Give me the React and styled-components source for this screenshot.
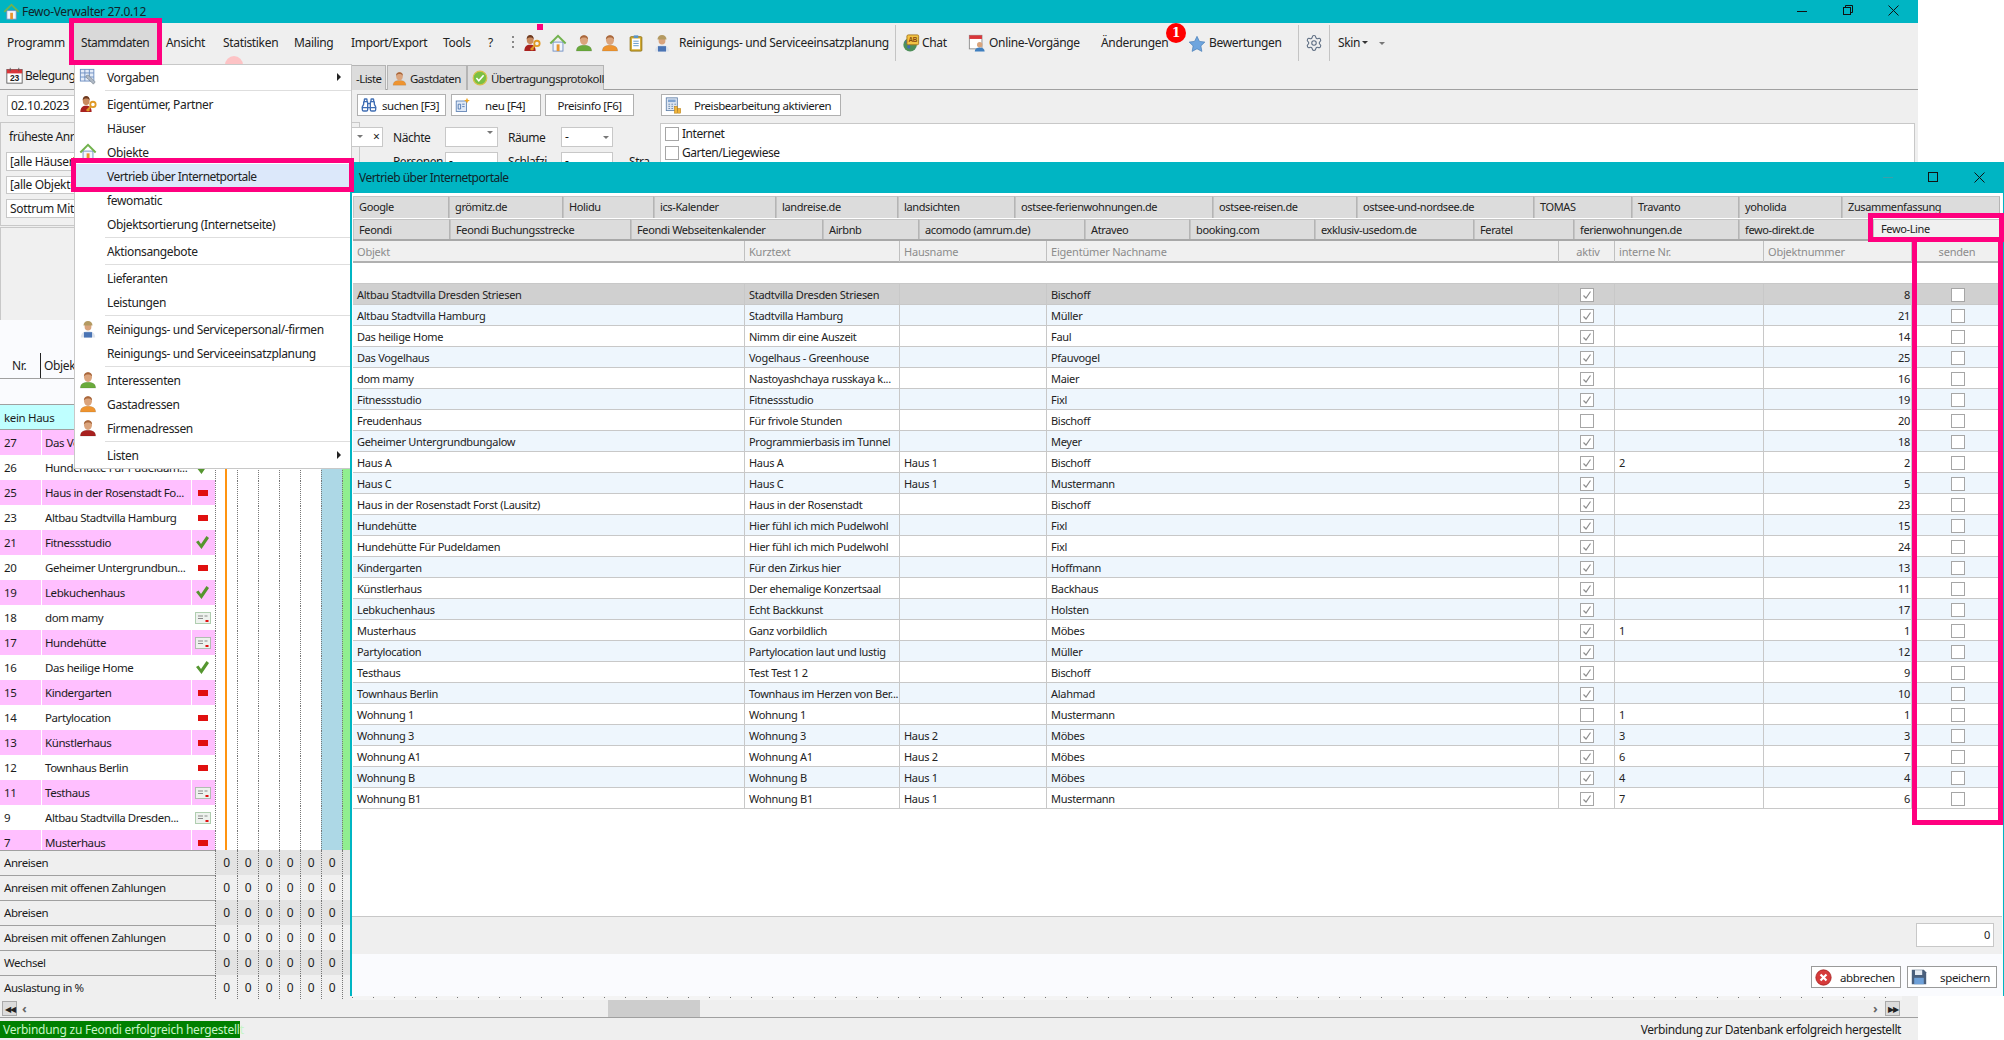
import React from "react";
import styled, { createGlobalStyle, css } from "styled-components";
import { Settings, Binoculars } from "lucide-react";

const FONT = `"Noto Sans", "Liberation Sans", sans-serif`;
const TEAL = "#00b5c3";
const PINK = "#ff007f";
const LINE = "#c8c8c8";
const DARK = "#a0a0a0";

const Global = createGlobalStyle`
  html, body { margin: 0; padding: 0; background: #fff; overflow: hidden; }
  * { box-sizing: border-box; }
  body { font-family: ${FONT}; font-size: 12px; letter-spacing: -0.33px; color: #1c1c1c; }
  svg { flex: none; }
`;

const place = css`
  position: absolute;
  left: ${(p) => p.$x}px;
  top: ${(p) => p.$y}px;
`;
const box = css`
  ${place}
  width: ${(p) => p.$w}px;
  height: ${(p) => p.$h}px;
`;

const Screen = styled.div`
  position: relative;
  width: 2004px;
  height: 1040px;
  overflow: hidden;
  background: #fff;
`;
const MainWindow = styled.div`
  position: absolute;
  left: 0;
  top: 0;
  width: 1918px;
  height: 1040px;
  background: #efefef;
`;
const TitleBar = styled.div`
  position: absolute;
  left: 0;
  top: 0;
  width: 100%;
  height: 23px;
  background: ${TEAL};
`;
const TitleText = styled.span`
  position: absolute;
  left: 22px;
  top: 3px;
  font-size: 12px;
  line-height: 18px;
  color: #10242a;
`;
const IconSlot = styled.div`
  ${place}
  line-height: 0;
`;
const MenuBar = styled.div`
  position: absolute;
  left: 0;
  top: 23px;
  width: 100%;
  height: 67px;
  border-bottom: 1px solid ${DARK};
`;
const MenuLabel = styled.span`
  ${place}
  font-size: 12px;
  line-height: 18px;
  white-space: nowrap;
  color: #222;
`;
const StammBox = styled.div`
  position: absolute;
  left: 69px;
  top: 18px;
  width: 93px;
  height: 47px;
  background: #d9d9d9;
  border: 5px solid ${PINK};
  z-index: 30;
  padding: 11px 0 0 7px;
  font-size: 12px;
  line-height: 18px;
  letter-spacing: -0.45px;
  color: #222;
`;
const PinkDot = styled.div`
  position: absolute;
  left: 537px;
  top: 24px;
  width: 6px;
  height: 6px;
  background: ${PINK};
`;
const GhostBadge = styled.div`
  position: absolute;
  left: 225px;
  top: 56px;
  width: 18px;
  height: 18px;
  border-radius: 50%;
  background: #fdc3c5;
`;
const VSep = styled.div`
  ${place}
  width: 1px;
  height: 36px;
  background: #c4c4c4;
`;
const Badge = styled.div`
  position: absolute;
  left: 1166px;
  top: 23px;
  width: 20px;
  height: 20px;
  border-radius: 50%;
  background: #f00;
  color: #fff;
  font: bold 12px/20px "DejaVu Serif", serif;
  text-align: center;
`;
const Caret = styled.div`
  ${place}
  width: 0;
  height: 0;
  border-left: 3px solid transparent;
  border-right: 3px solid transparent;
  border-top: 3px solid ${(p) => p.$c || "#333"};
`;
const StripTab = styled.div`
  ${box}
  background: #dcdcdc;
  border: 1px solid #b4b4b4;
  border-bottom: none;
  display: flex;
  align-items: center;
  gap: 3px;
  padding-left: ${(p) => p.$pad ?? 4}px;
  font-size: 11.5px;
  letter-spacing: -0.55px;
  white-space: nowrap;
`;
const FlatLabel = styled.span`
  ${place}
  font-size: 12px;
  line-height: 16px;
  letter-spacing: -0.45px;
  white-space: nowrap;
`;
const Field = styled.div`
  ${box}
  background: #fff;
  border: 1px solid ${LINE};
  font-size: 12px;
  line-height: ${(p) => p.$h - 2}px;
  padding-left: 3px;
  white-space: nowrap;
  overflow: hidden;
`;
const ToolButton = styled.div`
  ${box}
  background: #fff;
  border: 1px solid #b0b0b0;
  display: flex;
  align-items: center;
  justify-content: ${(p) => (p.$center ? "center" : "flex-start")};
  padding-left: ${(p) => (p.$center ? 0 : 3)}px;
  font-size: 11.5px;
  letter-spacing: -0.45px;
  white-space: nowrap;
`;
const ButtonText = styled.span`
  margin-left: ${(p) => p.$gap}px;
`;
const GroupPanel = styled.div`
  ${box}
  background: #f0f0f0;
  border: 1px solid ${LINE};
`;
const WhitePanel = styled.div`
  ${box}
  background: #fff;
  border: 1px solid ${LINE};
`;
const Check = styled.div`
  ${place}
  width: 14px;
  height: 14px;
  background: #fff;
  border: 1px solid #a6a6a6;
`;

/* ---------- left planning grid ---------- */
const PlanHeadArea = styled.div`
  position: absolute;
  left: 0;
  top: 320px;
  width: 352px;
  height: 85px;
  background: #fafbfe;
  border-bottom: 1px solid ${DARK};
`;
const PlanHead = styled.div`
  position: absolute;
  left: 0;
  top: 33px;
  width: 100%;
  height: 26px;
  border-bottom: 1px solid ${DARK};
  display: flex;
  align-items: center;
`;
const HeadCell = styled.div`
  width: ${(p) => p.$w}px;
  height: 25px;
  line-height: 25px;
  padding-left: ${(p) => p.$pad}px;
  border-right: ${(p) => (p.$sep ? "1px solid #222" : "none")};
`;
const HouseRow = styled.div`
  position: absolute;
  left: 0;
  top: 405px;
  width: 352px;
  height: 25px;
  background: #bfffff;
  border-bottom: 1px solid ${DARK};
  line-height: 25px;
  padding-left: 4px;
  font-size: 11.5px;
`;
const PlanBody = styled.div`
  position: absolute;
  left: 0;
  top: 430px;
  width: 352px;
  height: 420px;
  overflow: hidden;
  font-size: 11.5px;
  letter-spacing: -0.42px;
`;
const PlanRow = styled.div`
  display: grid;
  grid-template-columns: 41px 150px 24px 22px repeat(5, 21px) 10px;
  height: 25px;
`;
const NrCell = styled.div`
  background: ${(p) => (p.$pink ? "#ffbfff" : "#fff")};
  border-bottom: 1px solid ${DARK};
  line-height: 25px;
  padding-left: 4px;
`;
const NameCell = styled.div`
  background: ${(p) => (p.$pink ? "#ffbfff" : "#fff")};
  border-bottom: 1px solid ${DARK};
  border-left: 1px solid #fff;
  line-height: 25px;
  padding-left: 3px;
  white-space: nowrap;
  overflow: hidden;
`;
const StateCell = styled.div`
  background: ${(p) => (p.$pink ? "#ffbfff" : "#fff")};
  border-bottom: 1px solid ${DARK};
  border-left: 1px solid #fff;
  display: flex;
  align-items: center;
  justify-content: center;
  padding-right: 2px;
`;
const DayCell = styled.div`
  background: ${(p) => p.$bg || "#fff"};
  border-left: 1px dotted #777;
  border-bottom: 1px dotted #777;
`;
const OrangeLine = styled.div`
  position: absolute;
  left: 225px;
  top: 430px;
  width: 2px;
  height: 420px;
  background: #ff9410;
`;
const MinusMark = styled.div`
  width: 10px;
  height: 6px;
  background: #e01010;
`;
const SumArea = styled.div`
  position: absolute;
  left: 0;
  top: 850px;
  width: 352px;
  height: 150px;
  overflow: hidden;
  font-size: 11.5px;
  letter-spacing: -0.42px;
`;
const SumRow = styled.div`
  display: grid;
  grid-template-columns: 215px 22px repeat(5, 21px) 10px;
  height: 25px;
`;
const SumLabel = styled.div`
  background: #efefef;
  border-top: 1px solid ${DARK};
  line-height: 23px;
  padding-left: 4px;
  white-space: nowrap;
`;
const SumCell = styled.div`
  background: ${(p) => (p.$shade ? "#e3e3e3" : "#f0f0f0")};
  border-left: 1px dotted #777;
  border-bottom: 1px dotted #777;
  text-align: center;
  line-height: 25px;
  font-size: 12px;
`;
const TickStrip = styled.div`
  position: absolute;
  left: 352px;
  top: 996px;
  width: 1550px;
  height: 4px;
  background: repeating-linear-gradient(90deg, #777 0 1px, transparent 1px 21px) 0 1px / 100% 1px no-repeat, #f4f4f4;
`;
const ScrollZone = styled.div`
  position: absolute;
  left: 0;
  top: 1000px;
  width: 1918px;
  height: 18px;
  background: #efefef;
  border-bottom: 1px solid ${DARK};
`;
const ScrollThumb = styled.div`
  position: absolute;
  left: 608px;
  top: 0;
  width: 92px;
  height: 17px;
  background: #cdcdcd;
`;
const ScrollEnd = styled.div`
  ${place}
  width: 15px;
  height: 15px;
  top: 1px;
  background: #dcdcdc;
  border: 1px solid #aaa;
  color: #222;
  font-size: 8px;
  line-height: 13px;
  text-align: center;
  letter-spacing: -1px;
`;
const ScrollArrow = styled.div`
  ${place}
  top: 1px;
  color: #666;
  font-size: 13px;
  line-height: 15px;
  font-weight: bold;
`;
const StatusOk = styled.div`
  position: absolute;
  left: 0;
  top: 1021px;
  width: 240px;
  height: 17px;
  background: #008000;
  color: #c6f5c6;
  font-size: 12px;
  line-height: 17px;
  padding-left: 3px;
  white-space: nowrap;
  letter-spacing: -0.25px;
`;
const StatusRight = styled.div`
  position: absolute;
  right: 17px;
  top: 1021px;
  font-size: 12px;
  line-height: 17px;
  white-space: nowrap;
  letter-spacing: -0.42px;
`;

/* ---------- Stammdaten menu ---------- */
const Menu = styled.div`
  position: absolute;
  left: 74px;
  top: 64px;
  width: 278px;
  height: 405px;
  background: #fff;
  border: 1px solid ${LINE};
  display: flex;
  flex-direction: column;
  z-index: 10;
`;
const MenuItem = styled.div`
  position: relative;
  flex: 0 0 24px;
  height: 24px;
  line-height: 25px;
  padding-left: 32px;
  font-size: 12px;
  letter-spacing: ${(p) => (p.$active ? "-0.52px" : "-0.36px")};
  white-space: nowrap;
  background: ${(p) => (p.$active ? "#dce8fa" : "transparent")};
  color: #222;
`;
const MenuIcon = styled.span`
  position: absolute;
  left: 4px;
  top: 3px;
  line-height: 0;
`;
const MenuArrow = styled.span`
  position: absolute;
  right: 10px;
  top: 8px;
  width: 0;
  height: 0;
  border-top: 4px solid transparent;
  border-bottom: 4px solid transparent;
  border-left: 4px solid #222;
`;
const MenuSep = styled.div`
  flex: 0 0 1px;
  margin: 1px 0 1px 30px;
  background: #dedede;
`;
const VertriebBox = styled.div`
  position: absolute;
  left: 71px;
  top: 158px;
  width: 283px;
  height: 34px;
  border: 5px solid ${PINK};
  z-index: 30;
`;

/* ---------- dialog ---------- */
const Dialog = styled.div`
  position: absolute;
  left: 350px;
  top: 162px;
  width: 1654px;
  height: 834px;
  background: #fafbfe;
  border-left: 2px solid ${TEAL};
  border-right: 1px solid ${TEAL};
  z-index: 20;
`;
const DialogTitle = styled.div`
  position: absolute;
  left: -2px;
  top: 0;
  width: 1654px;
  height: 31px;
  background: ${TEAL};
  padding-left: 9px;
  line-height: 32px;
  font-size: 12px;
  letter-spacing: -0.52px;
  color: #10242a;
`;
const DialogBody = styled.div`
  position: absolute;
  left: 0;
  top: 31px;
  width: 1650px;
  height: 761px;
  background: #fff;
  border-bottom: 2px solid ${DARK};
`;
const TabRows = styled.div`
  position: absolute;
  left: 1px;
  top: 3px;
  width: 1647px;
`;
const TabRow = styled.div`
  display: flex;
  height: ${(p) => p.$h}px;
  margin-bottom: 1px;
`;
const Tab = styled.div`
  width: ${(p) => p.$w}px;
  height: 100%;
  background: ${(p) => (p.$on ? "#f0f0f0" : "#dcdcdc")};
  border-right: 1px solid #b4b4b4;
  border-top: 1px solid #c4c4c4;
  border-left: 1px solid #c4c4c4;
  line-height: ${(p) => (p.$on ? 17 : 19)}px;
  padding-left: ${(p) => (p.$on ? 7 : 5)}px;
  font-size: 11px;
  letter-spacing: -0.38px;
  white-space: nowrap;
  color: #222;
  overflow: hidden;
`;
const TabFoot = styled.div`
  height: 2px;
  background: #a8a8a8;
  margin-top: -1px;
`;
const Grid = styled.div`
  position: absolute;
  left: 1px;
  top: 48px;
  width: 1647px;
`;
const gridCols = "392px 155px 147px 512px 56px 149px 148px 88px";
const GridHead = styled.div`
  display: grid;
  grid-template-columns: ${gridCols};
  height: 22px;
  background: #f0f0f0;
  border-bottom: 2px solid #b0b0b0;
`;
const GridHeadCell = styled.div`
  line-height: 21px;
  padding-left: ${(p) => (p.$center ? 3 : 4)}px;
  text-align: ${(p) => (p.$center ? "center" : "left")};
  font-size: 11px;
  letter-spacing: -0.2px;
  color: #8c8c8c;
  border-right: 1px solid #c0c0c0;
  white-space: nowrap;
`;
const FilterRow = styled.div`
  height: 21px;
  background: #fff;
  border-bottom: 1px solid ${LINE};
`;
const GridRow = styled.div`
  display: grid;
  grid-template-columns: ${gridCols};
  height: 21px;
  background: ${(p) => (p.$sel ? "#d0d0d0" : p.$alt ? "#eef6fd" : "#fff")};
  border-bottom: 1px solid ${LINE};
`;
const GridCell = styled.div`
  line-height: 22px;
  height: 20px;
  font-size: 11px;
  letter-spacing: -0.3px;
  padding: 0 ${(p) => (p.$right ? 1 : 0)}px 0 ${(p) => (p.$right ? 0 : 4)}px;
  text-align: ${(p) => (p.$right ? "right" : "left")};
  border-right: 1px solid ${LINE};
  white-space: nowrap;
  overflow: hidden;
  color: #222;
`;
const BoxCell = styled.div`
  display: flex;
  align-items: center;
  justify-content: center;
  padding-left: ${(p) => (p.$plain ? 4 : 0)}px;
  padding-top: 2px;
  height: 20px;
  border-right: 1px solid ${(p) => (p.$plain ? "transparent" : LINE)};
`;
const CellCheck = styled.div`
  width: 14px;
  height: 14px;
  background: #fff;
  border: 1px solid #a6a6a6;
  display: flex;
  align-items: center;
  justify-content: center;
  line-height: 0;
`;
const SumBar = styled.div`
  position: absolute;
  left: 0;
  top: 723px;
  width: 1650px;
  height: 38px;
  background: #efefef;
  border-top: 1px solid ${LINE};
`;
const SumField = styled.div`
  position: absolute;
  left: 1564px;
  top: 6px;
  width: 78px;
  height: 24px;
  background: #fff;
  border: 1px solid ${LINE};
  text-align: right;
  padding-right: 3px;
  line-height: 22px;
  font-size: 11px;
`;
const ActionButton = styled.div`
  ${box}
  background: #fff;
  border: 1px solid #9a9a9a;
  display: flex;
  align-items: center;
  padding-left: 3px;
  font-size: 11.5px;
`;
const PinkColumn = styled.div`
  position: absolute;
  left: 1912px;
  top: 242px;
  width: 91px;
  height: 583px;
  border: 5px solid ${PINK};
  border-top: none;
  z-index: 40;
`;
const PinkTab = styled.div`
  position: absolute;
  left: 1868px;
  top: 213px;
  width: 136px;
  height: 29px;
  border: 5px solid ${PINK};
  z-index: 40;
`;

/* ---------- drawn icons ---------- */
const Svg = ({ s = 18, children }) => (
  <svg width={s} height={s} viewBox="0 0 20 20">{children}</svg>
);
const Person = ({ c, s }) => (
  <Svg s={s}>
    <path d="M1.5 19c0-5 3.5-6.5 8.5-6.5S18.5 14 18.5 19z" fill={c} stroke="#0003" strokeWidth=".6" />
    <ellipse cx="10" cy="7" rx="4.4" ry="5.2" fill="#dba47c" />
    <path d="M5.5 6.500C5.200 2.500 8 1.500 10 1.500s4.800 1 4.500 5c-1-2-2.500-2.500-4.500-2.500s-3.500.5-4.500 2.500z" fill="#a9673c" />
  </Svg>
);
const KeyPerson = ({ s }) => (
  <Svg s={s}>
    <path d="M1.5 19c0-5 2.5-7 6.500-7s6 2 6 7z" fill="#a8211f" />
    <ellipse cx="8" cy="6.5" rx="3.8" ry="4.8" fill="#c98a5e" />
    <path d="M4 6C4 2.500 6 1 8 1s4 1.500 4 5c-1-1.500-2-2-4-2s-3 .5-4 2z" fill="#6d3a20" />
    <circle cx="15.5" cy="10.5" r="3" fill="none" stroke="#e09a25" strokeWidth="2" />
    <path d="M13.5 12.500l-5 5M10 16l1.500 1.500" stroke="#e09a25" strokeWidth="2" fill="none" />
  </Svg>
);
const House = ({ s }) => (
  <Svg s={s}>
    <rect x="4.5" y="9" width="11" height="10" fill="#f2f5fb" stroke="#6f8fc4" />
    <rect x="8.5" y="11.5" width="3.2" height="7.5" fill="#e8952e" />
    <path d="M1.5 10.500L10 2l8.500 8.500" fill="none" stroke="#72b24e" strokeWidth="2.2" />
  </Svg>
);
const Clipboard = ({ s }) => (
  <Svg s={s}>
    <rect x="3.5" y="3" width="13" height="16" rx="1" fill="#d2a92c" stroke="#8f7214" />
    <rect x="5.5" y="5" width="9" height="12" fill="#fff" />
    <rect x="7.5" y="1.5" width="5" height="3" fill="#5a94c9" />
    <path d="M7 8h6M7 10.500h6M7 13h6" stroke="#5a94c9" />
  </Svg>
);
const Worker = ({ s }) => (
  <Svg s={s}>
    <path d="M2 19.500c0-5 3.500-7 8-7s8 2 8 7z" fill="#dfe4ec" />
    <path d="M5.5 19.500v-6h9v6z" fill="#4a74b4" />
    <ellipse cx="10" cy="7.5" rx="3.8" ry="4.2" fill="#d9a47c" />
    <path d="M5 6c0-3 2-5 5-5s5 2 5 5z" fill="#b49a62" />
  </Svg>
);
const Chat = ({ s }) => (
  <Svg s={s}>
    <circle cx="9" cy="12" r="7.5" fill="#4e8f5a" />
    <path d="M4 8c3 1 5 4 3 8" fill="none" stroke="#3b6fb5" strokeWidth="3" />
    <rect x="5.5" y="1" width="13" height="11" rx="1.5" fill="#f3c443" stroke="#a5741a" />
    <text x="12" y="9.3" fontSize="7" fontWeight="700" textAnchor="middle" fill="#8a4a10" fontFamily="Liberation Sans">AB</text>
  </Svg>
);
const OnlineIcon = ({ s }) => (
  <Svg s={s}>
    <rect x="1.5" y="1.5" width="14" height="15" fill="#fff" stroke="#8b8b8b" />
    <rect x="1.5" y="1.5" width="14" height="4" fill="#d9363a" />
    <circle cx="13" cy="12" r="3" fill="#d9a47c" />
    <path d="M7.5 19.500c0-3 2.500-4.500 5.500-4.500s5.500 1.500 5.500 4.500z" fill="#3f7fbf" />
  </Svg>
);
const Star = ({ s }) => (
  <Svg s={s}>
    <path d="M10 1.500l2.700 5.600 6 .8-4.400 4.200 1.100 6.100L10 15.300l-5.400 2.900 1.100-6.100L1.300 7.900l6-.8z" fill="#6ea5de" stroke="#4a7fb8" strokeWidth=".8" />
  </Svg>
);
const CalendarDay = ({ s }) => (
  <Svg s={s}>
    <rect x="1" y="3" width="18" height="16" fill="#fff" stroke="#555" />
    <rect x="1" y="3" width="18" height="4.5" fill="#d9363a" />
    <path d="M5 1v4M15 1v4" stroke="#555" />
    <text x="10" y="17" fontSize="10" fontWeight="700" textAnchor="middle" fill="#222" fontFamily="Liberation Sans">23</text>
  </Svg>
);
const Preferences = ({ s }) => (
  <Svg s={s}>
    <rect x="1.5" y="1.5" width="15" height="13" fill="#e4ecf8" stroke="#6a8cc0" />
    <path d="M1.5 5.500h15M6.500 1.500v13M11.500 1.500v13M1.500 10h15" stroke="#6a8cc0" />
    <path d="M8 8.500c1.500-1 3.500-.5 4 1l6 6-2 2.500-6-6c-1.500-.5-2.500-2-2-3.500z" fill="#aeb8c4" stroke="#6c7580" strokeWidth=".6" />
  </Svg>
);
const NewCard = ({ s }) => (
  <Svg s={s}>
    <rect x="1.5" y="5" width="13" height="13" fill="#dfe9f7" stroke="#5077ad" />
    <path d="M4 9h3v6H4zM9 9h3M9 12h3" stroke="#3e6aa8" fill="none" />
    <path d="M15 1l1 2.500 2.500 1-2.500 1-1 2.500-1-2.500-2.500-1 2.500-1z" fill="#f0a51e" />
  </Svg>
);
const CalcIcon = ({ s }) => (
  <Svg s={s}>
    <rect x="1.5" y="1" width="13" height="15" fill="#dfe7f2" stroke="#5f7fa8" />
    <rect x="3.5" y="3" width="9" height="3" fill="#7fa4d2" />
    <path d="M4 8.500h2M7.500 8.500h2M11 8.500h2M4 11h2M7.500 11h2M4 13.500h2M7.500 13.500h2" stroke="#5f7fa8" />
    <rect x="11" y="11" width="3.5" height="8" fill="#f0b33a" stroke="#b27d12" strokeWidth=".6" />
    <rect x="15" y="13.5" width="3.5" height="5.5" fill="#f0b33a" stroke="#b27d12" strokeWidth=".6" />
  </Svg>
);
const Protocol = ({ s }) => (
  <Svg s={s}>
    <circle cx="10" cy="10" r="8.5" fill="#7ac043" stroke="#d8c04a" strokeWidth="1.5" />
    <path d="M5.5 10l3 3.500 6-7" fill="none" stroke="#fff" strokeWidth="2" />
  </Svg>
);
const CancelIcon = () => (
  <Svg s={17}>
    <circle cx="10" cy="10" r="9" fill="#d63a3a" stroke="#a82222" />
    <path d="M6.5 6.500l7 7M13.500 6.500l-7 7" stroke="#fff" strokeWidth="2.6" />
  </Svg>
);
const SaveIcon = () => (
  <Svg s={16}>
    <path d="M1 1h15l3 3v15H1z" fill="#4a5f7c" />
    <rect x="5" y="1.5" width="9" height="6" fill="#e6ebf2" />
    <rect x="4" y="11" width="12" height="8" fill="#6ea0d8" />
  </Svg>
);
const GreenCheck = () => (
  <svg width="13" height="13" viewBox="0 0 13 13">
    <path d="M0 6l2.500-1.500L5 8l5.500-8L13 2 5.500 13z" fill="#55962f" />
  </svg>
);
const CalState = () => (
  <svg width="16" height="12" viewBox="0 0 16 12">
    <rect x=".5" y=".5" width="15" height="11" fill="#eef2ee" stroke="#6aa56a" strokeDasharray="1 1" />
    <path d="M3 4h5M3 6.500h5M9.500 4h3" stroke="#8a8a8a" />
    <rect x="10.5" y="8" width="3" height="2" fill="#e01010" />
  </svg>
);
const SmallCheck = () => (
  <svg width="10" height="10" viewBox="0 0 10 10">
    <path d="M1.5 5.500L4 8l4.500-6.500" fill="none" stroke="#8c8c8c" strokeWidth="1.2" />
  </svg>
);
const WinMin = ({ c = "#111" }) => (
  <svg width="10" height="10" viewBox="0 0 10 10"><path d="M0 5.500h10" stroke={c} /></svg>
);
const WinRestore = () => (
  <svg width="10" height="10" viewBox="0 0 10 10" fill="none" stroke="#111">
    <path d="M2.500 2.500V.5h7v7h-2" /><rect x=".5" y="2.5" width="7" height="7" />
  </svg>
);
const WinMax = () => (
  <svg width="10" height="10" viewBox="0 0 10 10" fill="none" stroke="#111"><rect x=".5" y=".5" width="9" height="9" /></svg>
);
const WinClose = () => (
  <svg width="11" height="11" viewBox="0 0 11 11" fill="none" stroke="#111"><path d="M.5.500l10 10M10.500.5l-10 10" /></svg>
);

/* ---------- data ---------- */
const topMenu = [
  ["Programm", 7], ["Ansicht", 166], ["Statistiken", 223], ["Mailing", 294],
  ["Import/Export", 351], ["Tools", 443], ["?", 488],
  ["Reinigungs- und Serviceeinsatzplanung", 679], ["Chat", 922],
  ["Online-Vorgänge", 989], ["Änderungen", 1101], ["Bewertungen", 1209], ["Skin", 1338],
];
const menuEntries = [
  { t: "Vorgaben", i: <Preferences s={18} />, sub: true }, "-",
  { t: "Eigentümer, Partner", i: <KeyPerson s={18} /> },
  { t: "Häuser" },
  { t: "Objekte", i: <House s={18} /> },
  { t: "Vertrieb über Internetportale", on: true },
  { t: "fewomatic" },
  { t: "Objektsortierung (Internetseite)" }, "-",
  { t: "Aktionsangebote" }, "-",
  { t: "Lieferanten" },
  { t: "Leistungen" }, "-",
  { t: "Reinigungs- und Servicepersonal/-firmen", i: <Worker s={18} /> },
  { t: "Reinigungs- und Serviceeinsatzplanung" }, "-",
  { t: "Interessenten", i: <Person c="#6aaa3c" s={18} /> },
  { t: "Gastadressen", i: <Person c="#ee9430" s={18} /> },
  { t: "Firmenadressen", i: <Person c="#a8211f" s={18} /> }, "-",
  { t: "Listen", sub: true },
];
const planRows = [
  [27, "Das Vogelhaus", ""], [26, "Hundehütte Für Pudeldam...", "c"], [25, "Haus in der Rosenstadt Fo...", "m"],
  [23, "Altbau Stadtvilla Hamburg", "m"], [21, "Fitnessstudio", "c"], [20, "Geheimer Untergrundbun...", "m"],
  [19, "Lebkuchenhaus", "c"], [18, "dom mamy", "k"], [17, "Hundehütte", "k"], [16, "Das heilige Home", "c"],
  [15, "Kindergarten", "m"], [14, "Partylocation", "m"], [13, "Künstlerhaus", "m"], [12, "Townhaus Berlin", "m"],
  [11, "Testhaus", "k"], [9, "Altbau Stadtvilla Dresden...", "k"], [7, "Musterhaus", "m"],
];
const sums = ["Anreisen", "Anreisen mit offenen Zahlungen", "Abreisen", "Abreisen mit offenen Zahlungen", "Wechsel", "Auslastung in %"];
const tabs1 = [["Google", 96], ["grömitz.de", 114], ["Holidu", 91], ["ics-Kalender", 122], ["landreise.de", 122], ["landsichten", 117], ["ostsee-ferienwohnungen.de", 198], ["ostsee-reisen.de", 144], ["ostsee-und-nordsee.de", 177], ["TOMAS", 98], ["Travanto", 107], ["yoholida", 103], ["Zusammenfassung", 158]];
const tabs2 = [["Feondi", 97], ["Feondi Buchungsstrecke", 181], ["Feondi Webseitenkalender", 192], ["Airbnb", 96], ["acomodo (amrum.de)", 166], ["Atraveo", 105], ["booking.com", 125], ["exklusiv-usedom.de", 159], ["Feratel", 100], ["ferienwohnungen.de", 165], ["fewo-direkt.de", 134], ["Fewo-Line", 127, true]];
const heads = ["Objekt", "Kurztext", "Hausname", "Eigentümer Nachname"];
const objects = [
  ["Altbau Stadtvilla Dresden Striesen", "Stadtvilla Dresden Striesen", "", "Bischoff", 1, "", 8],
  ["Altbau Stadtvilla Hamburg", "Stadtvilla Hamburg", "", "Müller", 1, "", 21],
  ["Das heilige Home", "Nimm dir eine Auszeit", "", "Faul", 1, "", 14],
  ["Das Vogelhaus", "Vogelhaus - Greenhouse", "", "Pfauvogel", 1, "", 25],
  ["dom mamy", "Nastoyashchaya russkaya k...", "", "Maier", 1, "", 16],
  ["Fitnessstudio", "Fitnessstudio", "", "Fixl", 1, "", 19],
  ["Freudenhaus", "Für frivole Stunden", "", "Bischoff", 0, "", 20],
  ["Geheimer Untergrundbungalow", "Programmierbasis im Tunnel", "", "Meyer", 1, "", 18],
  ["Haus A", "Haus A", "Haus 1", "Bischoff", 1, "2", 2],
  ["Haus C", "Haus C", "Haus 1", "Mustermann", 1, "", 5],
  ["Haus in der Rosenstadt Forst (Lausitz)", "Haus in der Rosenstadt", "", "Bischoff", 1, "", 23],
  ["Hundehütte", "Hier fühl ich mich Pudelwohl", "", "Fixl", 1, "", 15],
  ["Hundehütte Für Pudeldamen", "Hier fühl ich mich Pudelwohl", "", "Fixl", 1, "", 24],
  ["Kindergarten", "Für den Zirkus hier", "", "Hoffmann", 1, "", 13],
  ["Künstlerhaus", "Der ehemalige Konzertsaal", "", "Backhaus", 1, "", 11],
  ["Lebkuchenhaus", "Echt Backkunst", "", "Holsten", 1, "", 17],
  ["Musterhaus", "Ganz vorbildlich", "", "Möbes", 1, "1", 1],
  ["Partylocation", "Partylocation laut und lustig", "", "Müller", 1, "", 12],
  ["Testhaus", "Test Test 1 2", "", "Bischoff", 1, "", 9],
  ["Townhaus Berlin", "Townhaus im Herzen von Ber...", "", "Alahmad", 1, "", 10],
  ["Wohnung 1", "Wohnung 1", "", "Mustermann", 0, "1", 1],
  ["Wohnung 3", "Wohnung 3", "Haus 2", "Möbes", 1, "3", 3],
  ["Wohnung A1", "Wohnung A1", "Haus 2", "Möbes", 1, "6", 7],
  ["Wohnung B", "Wohnung B", "Haus 1", "Möbes", 1, "4", 4],
  ["Wohnung B1", "Wohnung B1", "Haus 1", "Mustermann", 1, "7", 6],
];
const dayBg = [null, null, null, null, null, null, "#add8e6", "#90ee90"];

export default function App() {
  return (
    <Screen>
      <Global />
      <MainWindow>
        <TitleBar>
          <IconSlot $x={3} $y={3}><House s={17} /></IconSlot>
          <TitleText>Fewo-Verwalter 27.0.12</TitleText>
          <IconSlot $x={1797} $y={6}><WinMin /></IconSlot>
          <IconSlot $x={1843} $y={5}><WinRestore /></IconSlot>
          <IconSlot $x={1888} $y={5}><WinClose /></IconSlot>
        </TitleBar>

        <MenuBar>
          {topMenu.map(([t, x]) => <MenuLabel key={t} $x={x} $y={11}>{t}</MenuLabel>)}
          <IconSlot $x={512} $y={12}>
            <svg width="2" height="16"><path d="M1 1v2M1 6v2M1 11v2" stroke="#888" strokeWidth="2" /></svg>
          </IconSlot>
          <IconSlot $x={523} $y={11}><KeyPerson s={18} /></IconSlot>
          <IconSlot $x={549} $y={11}><House s={18} /></IconSlot>
          <IconSlot $x={575} $y={11}><Person c="#6aaa3c" s={18} /></IconSlot>
          <IconSlot $x={601} $y={11}><Person c="#ee9430" s={18} /></IconSlot>
          <IconSlot $x={627} $y={11}><Clipboard s={18} /></IconSlot>
          <IconSlot $x={653} $y={11}><Worker s={18} /></IconSlot>
          <VSep $x={895} $y={2} />
          <IconSlot $x={902} $y={11}><Chat s={18} /></IconSlot>
          <IconSlot $x={968} $y={11}><OnlineIcon s={18} /></IconSlot>
          <IconSlot $x={1188} $y={12}><Star s={18} /></IconSlot>
          <VSep $x={1298} $y={2} />
          <IconSlot $x={1305} $y={11}><Settings size={18} color="#5b6b80" strokeWidth={1.4} /></IconSlot>
          <VSep $x={1329} $y={2} />
          <Caret $x={1362} $y={18} />
          <Caret $x={1379} $y={19} $c="#777" />
        </MenuBar>

        <PinkDot />
        <GhostBadge />
        <Badge>1</Badge>

        <IconSlot $x={6} $y={67}><CalendarDay s={17} /></IconSlot>
        <FlatLabel $x={25} $y={68}>Belegung</FlatLabel>
        <StripTab $x={340} $y={65} $w={46} $h={25} $pad={15}>-Liste</StripTab>
        <StripTab $x={387} $y={65} $w={80} $h={25}><Person c="#ee9430" s={15} />Gastdaten</StripTab>
        <StripTab $x={467} $y={65} $w={137} $h={25}><Protocol s={16} />Übertragungsprotokoll</StripTab>

        <Field $x={7} $y={95} $w={80} $h={21}>02.10.2023</Field>
        <ToolButton $x={357} $y={94} $w={89} $h={22}><Binoculars size={16} color="#3f6db3" /><ButtonText $gap={5}>suchen [F3]</ButtonText></ToolButton>
        <ToolButton $x={451} $y={94} $w={90} $h={22}><NewCard s={16} /><ButtonText $gap={14}>neu [F4]</ButtonText></ToolButton>
        <ToolButton $x={545} $y={94} $w={89} $h={22} $center>Preisinfo [F6]</ToolButton>
        <ToolButton $x={661} $y={94} $w={180} $h={22}><CalcIcon s={17} /><ButtonText $gap={12}>Preisbearbeitung aktivieren</ButtonText></ToolButton>

        <GroupPanel $x={0} $y={122} $w={360} $h={104} />
        <GroupPanel $x={0} $y={227} $w={360} $h={94} />
        <FlatLabel $x={9} $y={129}>früheste Anreise</FlatLabel>
        <Field $x={6} $y={152} $w={100} $h={19}>[alle Häuser]</Field>
        <Field $x={6} $y={176} $w={100} $h={18}>[alle Objekte]</Field>
        <Field $x={6} $y={199} $w={100} $h={19}>Sottrum Mitte</Field>

        <Field $x={340} $y={127} $w={43} $h={20} />
        <Caret $x={357} $y={135} $c="#777" />
        <FlatLabel $x={373} $y={129}>×</FlatLabel>
        <FlatLabel $x={393} $y={130}>Nächte</FlatLabel>
        <Field $x={445} $y={127} $w={53} $h={20} />
        <Caret $x={487} $y={131} $c="#777" />
        <FlatLabel $x={508} $y={130}>Räume</FlatLabel>
        <Field $x={561} $y={127} $w={52} $h={20}>-</Field>
        <Caret $x={603} $y={136} $c="#777" />
        <FlatLabel $x={393} $y={154}>Personen</FlatLabel>
        <Field $x={445} $y={152} $w={53} $h={18}>-</Field>
        <FlatLabel $x={508} $y={154}>Schlafzi</FlatLabel>
        <Field $x={561} $y={152} $w={52} $h={18}>-</Field>
        <FlatLabel $x={629} $y={154}>Stra</FlatLabel>

        <WhitePanel $x={660} $y={123} $w={1255} $h={60} />
        <Check $x={665} $y={127} />
        <FlatLabel $x={682} $y={126}>Internet</FlatLabel>
        <Check $x={665} $y={146} />
        <FlatLabel $x={682} $y={145}>Garten/Liegewiese</FlatLabel>

        <PlanHeadArea>
          <PlanHead>
            <HeadCell $w={41} $pad={12} $sep>Nr.</HeadCell>
            <HeadCell $w={150} $pad={3}>Objekt</HeadCell>
          </PlanHead>
        </PlanHeadArea>
        <HouseRow>kein Haus</HouseRow>
        <PlanBody>
          {planRows.map(([nr, name, st], i) => {
            const pink = i % 2 === 0;
            return (
              <PlanRow key={nr}>
                <NrCell $pink={pink}>{nr}</NrCell>
                <NameCell $pink={pink}>{name}</NameCell>
                <StateCell $pink={pink}>
                  {st === "c" && <GreenCheck />}
                  {st === "m" && <MinusMark />}
                  {st === "k" && <CalState />}
                </StateCell>
                {[0, 1, 2, 3, 4, 5, 6].map((d) => <DayCell key={d} $bg={dayBg[d + 1]} />)}
              </PlanRow>
            );
          })}
        </PlanBody>
        <OrangeLine />
        <SumArea>
          {sums.map((s, i) => (
            <SumRow key={s}>
              <SumLabel>{s}</SumLabel>
              {[0, 1, 2, 3, 4, 5].map((d) => <SumCell key={d} $shade={i % 2 === 0}>0</SumCell>)}
              <SumCell $shade={i % 2 === 0} />
            </SumRow>
          ))}
        </SumArea>
        <TickStrip />

        <ScrollZone>
          <ScrollEnd $x={2} $y={1}>◀◀</ScrollEnd>
          <ScrollArrow $x={22} $y={1}>‹</ScrollArrow>
          <ScrollThumb />
          <ScrollArrow $x={1873} $y={1}>›</ScrollArrow>
          <ScrollEnd $x={1885} $y={1}>▶▶</ScrollEnd>
        </ScrollZone>
        <StatusOk>Verbindung zu Feondi erfolgreich hergestellt</StatusOk>
        <StatusRight>Verbindung zur Datenbank erfolgreich hergestellt</StatusRight>
      </MainWindow>

      <StammBox>Stammdaten</StammBox>

      <Menu>
        {menuEntries.map((m, i) =>
          m === "-" ? (
            <MenuSep key={i} />
          ) : (
            <MenuItem key={m.t + i} $active={m.on}>
              {m.i && <MenuIcon>{m.i}</MenuIcon>}
              {m.t}
              {m.sub && <MenuArrow />}
            </MenuItem>
          )
        )}
      </Menu>
      <VertriebBox />

      <Dialog>
        <DialogTitle>
          Vertrieb über Internetportale
          <IconSlot $x={1533} $y={10}><WinMin c="#3aa0aa" /></IconSlot>
          <IconSlot $x={1578} $y={10}><WinMax /></IconSlot>
          <IconSlot $x={1624} $y={10}><WinClose /></IconSlot>
        </DialogTitle>
        <DialogBody>
          <TabRows>
            <TabRow $h={22}>
              {tabs1.map(([t, w]) => <Tab key={t} $w={w}>{t}</Tab>)}
            </TabRow>
            <TabRow $h={20}>
              {tabs2.map(([t, w, on]) => <Tab key={t} $w={w} $on={on}>{t}</Tab>)}
            </TabRow>
            <TabFoot />
          </TabRows>
          <Grid>
            <GridHead>
              {heads.map((h) => <GridHeadCell key={h}>{h}</GridHeadCell>)}
              <GridHeadCell $center>aktiv</GridHeadCell>
              <GridHeadCell>interne Nr.</GridHeadCell>
              <GridHeadCell>Objektnummer</GridHeadCell>
              <GridHeadCell $center>senden</GridHeadCell>
            </GridHead>
            <FilterRow />
            {objects.map((o, i) => (
              <GridRow key={o[0]} $sel={i === 0} $alt={i % 2 === 1}>
                <GridCell>{o[0]}</GridCell>
                <GridCell>{o[1]}</GridCell>
                <GridCell>{o[2]}</GridCell>
                <GridCell>{o[3]}</GridCell>
                <BoxCell><CellCheck>{o[4] ? <SmallCheck /> : null}</CellCheck></BoxCell>
                <GridCell>{o[5]}</GridCell>
                <GridCell $right>{o[6]}</GridCell>
                <BoxCell $plain><CellCheck /></BoxCell>
              </GridRow>
            ))}
          </Grid>
          <SumBar><SumField>0</SumField></SumBar>
        </DialogBody>
        <ActionButton $x={1459} $y={804} $w={90} $h={22}><CancelIcon /><ButtonText $gap={8}>abbrechen</ButtonText></ActionButton>
        <ActionButton $x={1555} $y={804} $w={90} $h={22}><SaveIcon /><ButtonText $gap={13}>speichern</ButtonText></ActionButton>
      </Dialog>

      <PinkTab />
      <PinkColumn />
    </Screen>
  );
}
